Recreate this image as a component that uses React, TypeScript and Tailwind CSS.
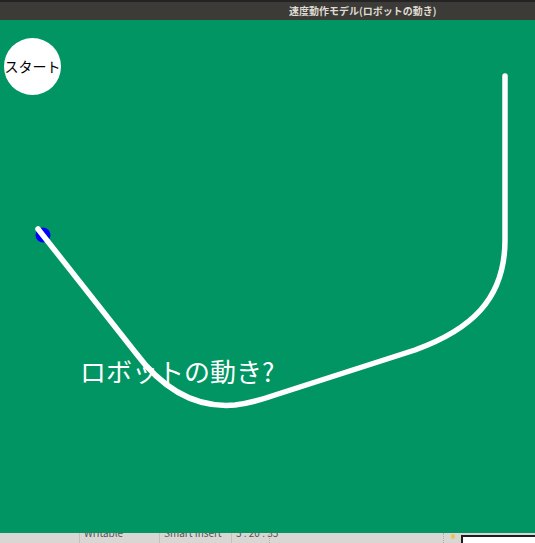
import React from "react";

const jp = { fontFamily: '"Noto Sans CJK JP", "Noto Sans", sans-serif' };

export default function App() {
  return (
    <div className="w-[535px] h-[543px] overflow-hidden flex flex-col bg-[#d9d7d4]" style={jp}>
      {/* title bar */}
      <div className="h-[20px] shrink-0 bg-[#3c3b37] border-t-2 border-[#242424] flex items-center">
        <span className="pl-[289px] text-[10px] font-bold text-[#dfdbd2] leading-none">
          速度動作モデル(ロボットの動き)
        </span>
      </div>

      {/* canvas */}
      <div className="relative h-[513px] shrink-0 bg-[#009562]">
        <svg className="absolute inset-0" width="535" height="513" viewBox="0 20 535 513">
          <circle cx="43" cy="235" r="7.5" fill="#0000ff" />
          <path
            d="M38 229 L135 352 Q178 410 235 405 Q252 403 275 395 L415 350 C470 330 505 300 505 240 L505 76"
            fill="none"
            stroke="#fff"
            strokeWidth="5.5"
            strokeLinecap="round"
            strokeLinejoin="round"
          />
        </svg>

        <button className="absolute left-[4px] top-[18px] w-[57px] h-[57px] rounded-full bg-white flex items-center justify-center text-[14px] text-black">
          スタート
        </button>

        <div className="absolute left-[80px] top-[338px] text-[26px] text-white leading-none">
          ロボットの動き?
        </div>
      </div>

      {/* status bar remnant */}
      <div className="relative h-[10px] flex text-[10px] text-[#555] leading-none overflow-hidden whitespace-nowrap">
        <div className="w-[80px] border-r border-[#c3c1be]" />
        <div className="w-[80px] border-r border-[#c3c1be] pl-[4px] -mt-[5px]">Writable</div>
        <div className="w-[72px] border-r border-[#c3c1be] pl-[4px] -mt-[5px]">Smart Insert</div>
        <div className="w-[38px] border-r border-dotted border-[#b0aea9] pl-[4px] -mt-[5px]">5 : 20 : 35</div>
        <div className="w-[174px] border-r border-dotted border-[#b0aea9]" />
        <div className="w-[17px] flex justify-center">
          <span className="w-[4px] h-[5px] rounded-full bg-[#e9c650] mt-[1px]" />
        </div>
        <div className="flex-1 border-l-2 border-t-2 border-[#1e1e1e] bg-white mt-[2px]" />
      </div>
    </div>
  );
}
